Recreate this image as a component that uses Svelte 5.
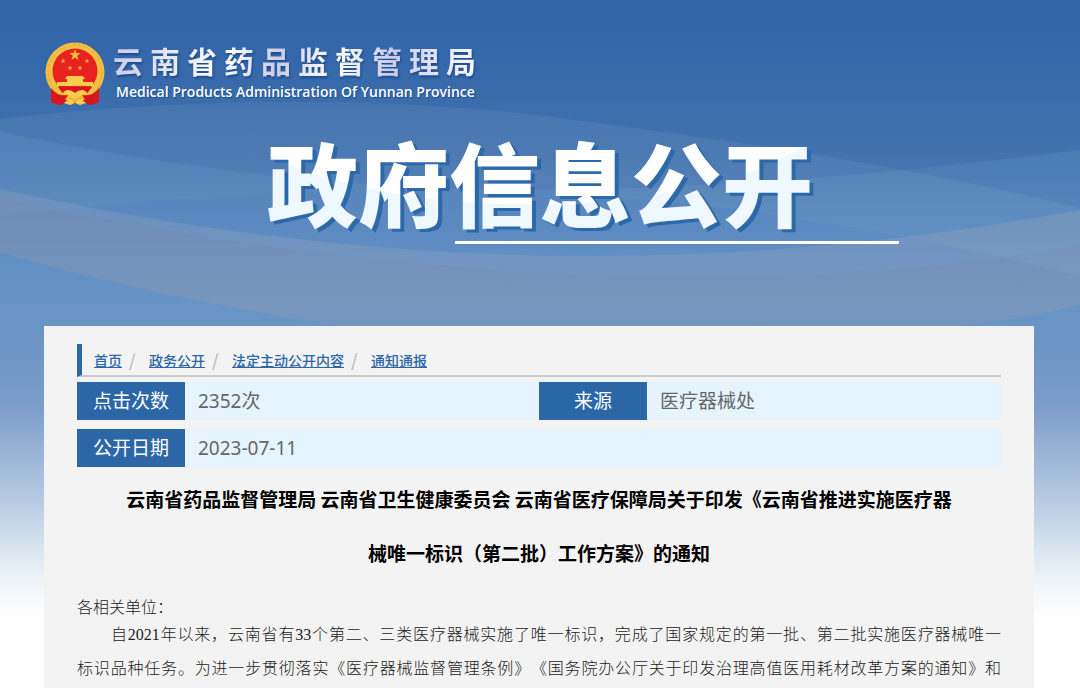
<script lang="ts">
    interface crumb {
        label: string;
        href: string;
    }

    const crumbs: crumb[] = [
        { label: '首页', href: '#home' },
        { label: '政务公开', href: '#affairs' },
        { label: '法定主动公开内容', href: '#statutory' },
        { label: '通知通报', href: '#notices' }
    ]

    const star = 'M0 -6 L1.4 -1.9 L5.7 -1.9 L2.3 .7 L3.5 4.9 L0 2.4 L-3.5 4.9 L-2.3 .7 L-5.7 -1.9 L-1.4 -1.9 Z'
    const smallStars = [[19, 20], [43, 20], [26, 27], [36, 27]]
</script>

<div class="page">
    <svg class="waves" viewBox="0 0 1080 340" preserveAspectRatio="none" aria-hidden="true">
        <path d="M0 119 C180 97 400 96 560 118 C740 142 900 164 1080 208 V340 H0 Z" fill="#fff" fill-opacity=".06" />
        <path d="M0 132 C170 166 340 190 520 190 C720 190 900 172 1080 150 V340 H0 Z" fill="#a0e0f0" fill-opacity=".08" />
        <path d="M0 215 C180 195 400 186 560 193 C760 206 930 238 1080 276 V340 H0 Z" fill="#4070c0" fill-opacity=".14" />
        <path d="M0 189 C180 229 380 256 590 256 C780 256 940 236 1080 210 V246 C940 270 820 276 690 276 C420 276 190 238 0 199 Z" fill="#c0b8b8" fill-opacity=".18" />
        <path d="M0 199 C190 238 420 276 690 276 C820 276 940 270 1080 246 V305 Q1020 320 960 326 V340 H420 C250 312 110 286 0 252 Z" fill="#a8a0a8" fill-opacity=".25" />
    </svg>

    <header>
        <div class="brand">
            <svg class="emblem" viewBox="0 0 62 66" role="img" aria-label="国徽">
                <path d="M8 46 L7 61 L15 64 L23 60 L31 63 L39 60 L47 64 L55 61 L54 46 Z" fill="#d8161b" />
                <circle cx="31" cy="31" r="29.5" fill="#f3bf42" />
                <circle cx="31" cy="31" r="27" fill="none" stroke="#e6aa33" stroke-width="1" stroke-dasharray="3 2" />
                <circle cx="31" cy="30" r="22.5" fill="#e8231f" />
                <path d={star} transform="translate(31 14)" fill="#f5b93a" />
                {#each smallStars as [x, y]}
                    <path d={star} transform="translate({x} {y}) scale(.45)" fill="#f5b93a" />
                {/each}
                <path d="M23 35 H39 L41 38 H39 V41 H49 V45 H13 V41 H23 V38 H21 Z" fill="#f8cc4c" />
                <path d="M14 46 H48 L42 54 H20 Z" fill="#d8161b" />
                <path d="M17 55 Q22 45 31 52 Q40 45 45 55 L38 54 L31 58 L24 54 Z" fill="#f8cc4c" />
                <path d="M7 47 Q14 56 24 54 L18 64 L7 61 Z M55 47 Q48 56 38 54 L44 64 L55 61 Z" fill="#d8161b" />
                <path d="M20 62 L25 58 L31 61 L37 58 L42 62 L36 64 L31 62 L26 64 Z" fill="#f8cc4c" />
            </svg>
            <div class="brand-text">
                <p class="brand-name">云南省药品监督管理局</p>
                <p class="brand-en" lang="en">Medical Products Administration Of Yunnan Province</p>
            </div>
        </div>
        <div class="banner">
            <h1>政府信息公开</h1>
            <span class="rule"></span>
        </div>
    </header>

    <main>
        <nav aria-label="当前位置">
            {#each crumbs as item, i}
                {#if i > 0}<span class="slash">/</span>{/if}
                <a href={item.href}>{item.label}</a>
            {/each}
        </nav>

        <table>
            <tbody>
                <tr>
                    <th scope="row">点击次数</th>
                    <td>2352次</td>
                    <th scope="row">来源</th>
                    <td>医疗器械处</td>
                </tr>
                <tr>
                    <th scope="row">公开日期</th>
                    <td colspan="3">2023-07-11</td>
                </tr>
            </tbody>
        </table>

        <article>
            <h2>
                云南省药品监督管理局 云南省卫生健康委员会 云南省医疗保障局关于印发《云南省推进实施医疗器<br />械唯一标识（第二批）工作方案》的通知
            </h2>
            <p>各相关单位：</p>
            <p class="indent">
                自2021年以来，云南省有33个第二、三类医疗器械实施了唯一标识，完成了国家规定的第一批、第二批实施医疗器械唯一<br />标识品种任务。为进一步贯彻落实《医疗器械监督管理条例》《国务院办公厅关于印发治理高值医用耗材改革方案的通知》和
            </p>
        </article>
    </main>
</div>

<style>
    :global(body) {
        margin: 0;
        background: #fff;
    }

    .page {
        position: relative;
        display: flex;
        flex-direction: column;
        min-height: 100vh;
        font-family: "Noto Sans", "Noto Sans CJK SC", sans-serif;
        background: linear-gradient(
            #3065a8 0,
            #3568aa 60px,
            #4473af 160px,
            #5583ba 240px,
            #6893c3 330px,
            #7b9dc9 405px,
            #b8cae3 500px,
            #d6e3ee 545px,
            #eff4f9 580px,
            #fff 620px
        );
    }

    .waves {
        position: absolute;
        top: 0;
        left: 0;
        width: 100%;
        height: 340px;
        mask-image: linear-gradient(#000 310px, transparent 340px);
    }

    header {
        position: relative;
        height: 326px;
    }

    h1,
    h2,
    p {
        margin: 0;
    }

    .brand {
        display: flex;
        gap: 7px;
        padding: 41px 0 0 44px;
    }

    .emblem {
        width: 62px;
        height: 66px;
    }

    .brand-name {
        font-family: "Noto Sans CJK SC", sans-serif;
        font-size: 30px;
        font-weight: 700;
        line-height: 38px;
        letter-spacing: 7px;
        white-space: nowrap;
        color: transparent;
        background: linear-gradient(100deg, #c9cbe8, #fff 30%, #c9cbe8 45%, #fff 60%, #c9cbe8 75%, #fff);
        background-clip: text;
        filter: drop-shadow(1px 2px 1px #1d4b8c);
    }

    .brand-en {
        padding-left: 3px;
        font-family: "Open Sans", sans-serif;
        font-size: 14px;
        font-weight: 600;
        line-height: 25px;
        color: #fff;
        text-shadow: 1px 1px 1px #1d4b8c;
    }

    .banner {
        display: flex;
        flex-direction: column;
        align-items: center;
        padding-top: 16px;
    }

    h1 {
        margin-bottom: 4px;
        font-family: "Noto Sans CJK SC", sans-serif;
        font-size: 91px;
        font-weight: 900;
        line-height: 114px;
        color: transparent;
        background: radial-gradient(ellipse 60% 110% at 48% -38%, #fff 99%, #f0f8ff 100%);
        background-clip: text;
        filter: drop-shadow(4px 3px 0 #2c69aa);
    }

    .rule {
        width: 444px;
        height: 3px;
        margin-left: 274px;
        background: #fff;
    }

    main {
        position: relative;
        flex: 1;
        margin: 0 46px 0 44px;
        padding: 18px 33px 0;
        background: #f3f3f3;
    }

    nav {
        display: flex;
        align-items: center;
        height: 31px;
        padding-left: 12px;
        border-left: 5px solid #2b66a6;
        border-bottom: 2px solid #ccc;
        font-family: "Noto Sans CJK SC", sans-serif;
        font-size: 14px;
        font-weight: 500;
    }

    nav a {
        color: #2b66a6;
    }

    .slash {
        width: 27px;
        padding-left: 7px;
        box-sizing: border-box;
        font-size: 17px;
        color: #bbb;
    }

    table {
        width: 100%;
        margin-top: 5px;
        table-layout: fixed;
        border-collapse: collapse;
        font-size: 19px;
    }

    th,
    td {
        height: 38px;
        padding: 0;
        line-height: 38px;
    }

    /* gap between the two rows */
    tr + tr > * {
        border-top: 9px solid #f3f3f3;
    }

    th {
        width: 108px;
        font-weight: 400;
        color: #fff;
        background: #2b66a6;
    }

    td {
        padding-left: 13px;
        color: #666;
        background: #e5f4ff;
    }

    article {
        padding-top: 5px;
        color: #222;
    }

    h2 {
        font-family: "Noto Sans CJK SC", sans-serif;
        font-size: 19px;
        font-weight: 700;
        line-height: 54px;
        text-align: center;
        white-space: nowrap;
        color: #000;
    }

    article p {
        margin-top: 18px;
        font-family: "Liberation Serif", "Noto Sans CJK SC", serif;
        font-size: 16px;
        font-weight: 300;
        line-height: 20px;
        text-spacing-trim: space-all;
    }

    article .indent {
        margin-top: 0;
        line-height: 34px;
        text-indent: 34px;
        text-align: justify;
        text-align-last: justify;
    }
</style>
